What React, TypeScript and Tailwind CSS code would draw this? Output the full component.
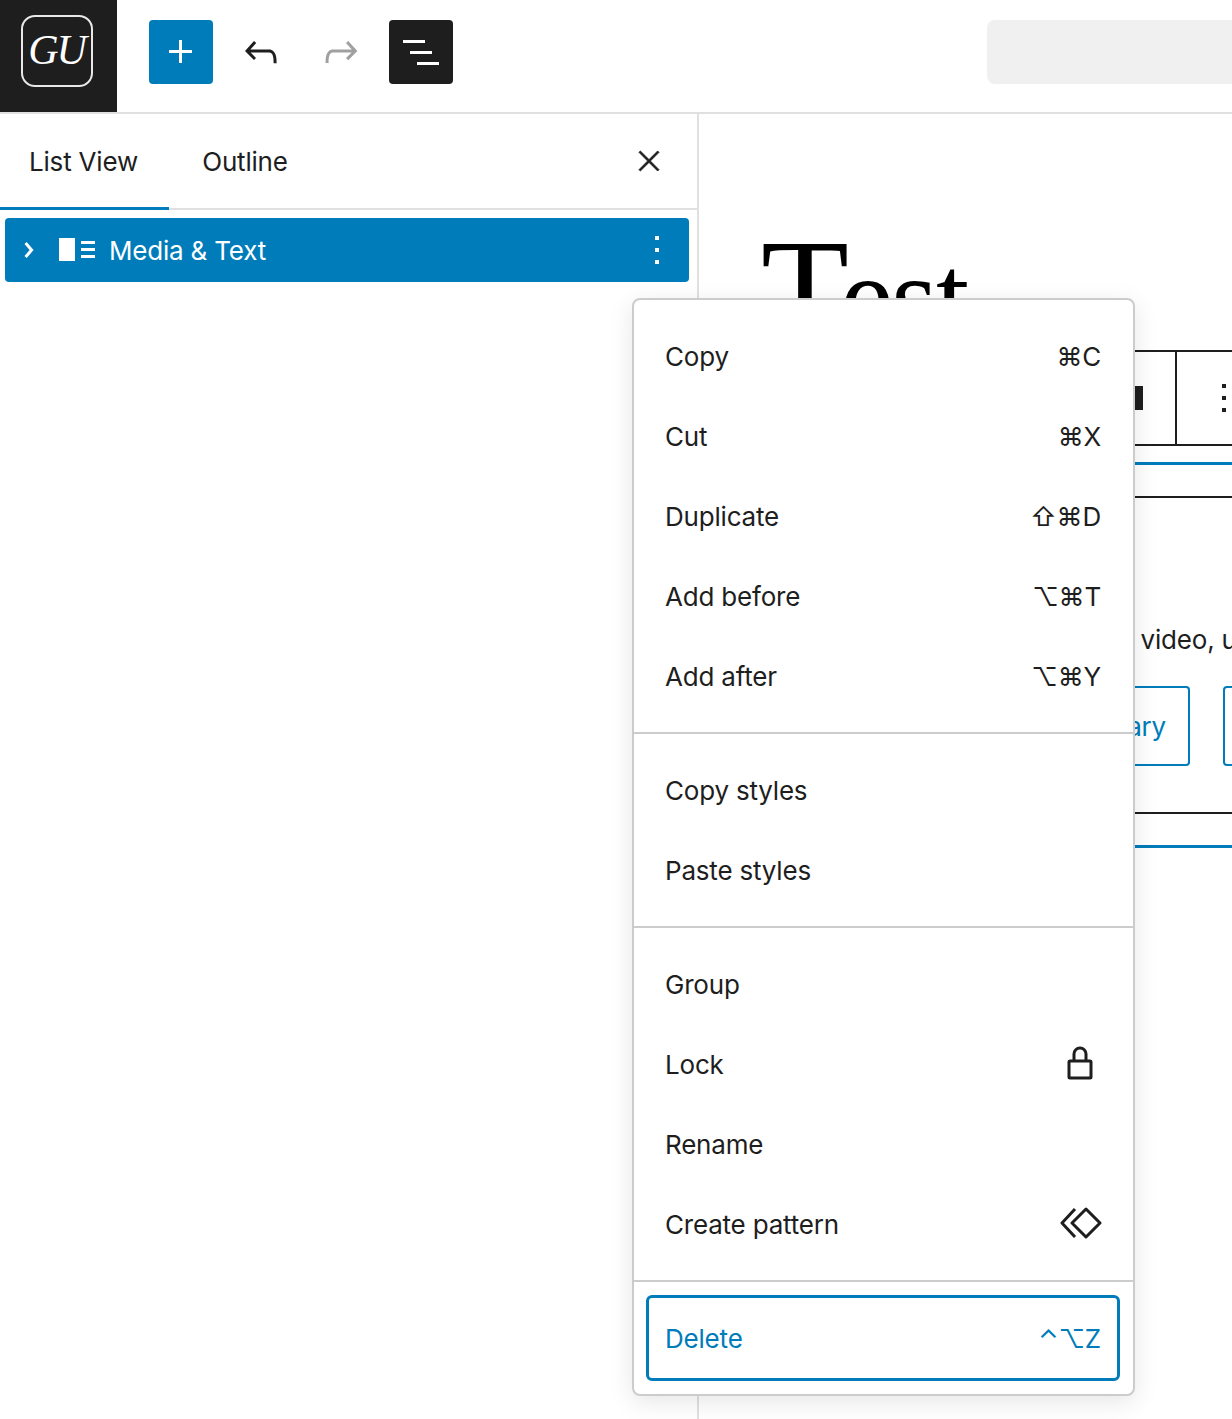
import type { ReactNode } from 'react';

const fontStack = 'font-["Inter","Noto_Sans","DejaVu_Sans",sans-serif]';

const LockIcon = () => (
  <svg className="mb-1 mr-2" width="26" height="36" viewBox="0 0 26 36" fill="none" stroke="#1e1e1e" strokeWidth="3">
    <path d="M7 17V9a6 6 0 0 1 12 0v8" />
    <rect x="2" y="16" width="22" height="17" rx="1" />
  </svg>
);

const PatternIcon = () => (
  <svg className="mb-[3px] mr-[-1px]" width="42" height="32" viewBox="0 0 42 32" fill="none" stroke="#1e1e1e" strokeWidth="3" strokeLinejoin="round">
    <path d="M15 2 2 16l13 14" />
    <path d="M26 2 40 16 26 30 12 16Z" />
  </svg>
);

type Item = { label: string; keys?: string; icon?: ReactNode };

const groups: Item[][] = [
  [
    { label: 'Copy', keys: '⌘C' },
    { label: 'Cut', keys: '⌘X' },
    { label: 'Duplicate', keys: '⇧⌘D' },
    { label: 'Add before', keys: '⌥⌘T' },
    { label: 'Add after', keys: '⌥⌘Y' },
  ],
  [{ label: 'Copy styles' }, { label: 'Paste styles' }],
  [
    { label: 'Group' },
    { label: 'Lock', icon: <LockIcon /> },
    { label: 'Rename' },
    { label: 'Create pattern', icon: <PatternIcon /> },
  ],
];

function MenuRow({ item }: { item: Item }) {
  return (
    <div className="flex h-20 items-center justify-between pl-[15px] pr-4 pt-px text-[26px] text-[#1e1e1e]">
      <span>{item.label}</span>
      {item.keys && <span>{item.keys}</span>}
      {item.icon}
    </div>
  );
}

function OptionsMenu() {
  return (
    <div className="absolute left-[632px] top-[298px] w-[503px] rounded-lg border-2 border-[#cccccc] bg-white shadow-[0_6px_24px_rgba(0,0,0,0.1)]">
      {groups.map((group, index) => (
        <div key={index} className="border-b-2 border-[#cccccc] p-4">
          {group.map((item) => (
            <MenuRow key={item.label} item={item} />
          ))}
        </div>
      ))}
      <div className="p-4">
        <div className="ml-[-1px] flex h-20 items-center justify-between rounded-[3px] pl-4 pr-4 pt-px text-[26px] text-[#007cba] outline-3 outline-[#007cba]">
          <span>Delete</span>
          <span>⌃⌥Z</span>
        </div>
      </div>
    </div>
  );
}

function Header() {
  return (
    <header className="flex h-[114px] items-start border-b-2 border-[#e0e0e0]">
      <div className="flex h-[112px] w-[117px] items-start bg-[#1e1e1e] pl-[21px] pt-[15px]">
        <div className="flex h-[72px] w-[72px] items-center justify-center rounded-[14px] border-2 border-[#e8e8e8] pb-[3px] pr-px font-['Liberation_Serif',serif] text-[42px] italic leading-none tracking-[-2px] text-white">
          GU
        </div>
      </div>
      <div className="ml-8 mt-5 flex h-16 w-16 items-center justify-center rounded bg-[#007cba]">
        <svg width="48" height="48" viewBox="0 0 24 24" fill="#fff">
          <path d="M11 12.5V17.5H12.5V12.5H17.5V11H12.5V6H11V11H6V12.5H11Z" />
        </svg>
      </div>
      <div className="ml-4 mt-5 flex h-16 w-16 items-center justify-center">
        <svg width="48" height="48" viewBox="0 0 24 24" fill="#1e1e1e">
          <path d="M18.3 11.7c-.6-.6-1.4-.9-2.3-.9H6.7l2.9-3.3-1.1-1-4.5 5L8.5 16l1-1-2.7-2.7H16c.5 0 .9.2 1.3.5 1 1 1 3.4 1 4.5v.3h1.5v-.2c0-1.5 0-4.3-1.5-5.7z" />
        </svg>
      </div>
      <div className="ml-4 mt-5 flex h-16 w-16 items-center justify-center">
        <svg width="48" height="48" viewBox="0 0 24 24" fill="#a0a0a0">
          <path d="M15.6 6.5l-1.1 1 2.9 3.3H8c-.9 0-1.7.3-2.3.9-1.4 1.5-1.4 4.2-1.4 5.6v.2h1.5v-.3c0-1.1 0-3.5 1-4.5.3-.3.7-.5 1.3-.5h9.2L14.5 15l1.1 1.1 4.6-4.6-4.6-5z" />
        </svg>
      </div>
      <div className="ml-4 mt-5 flex h-16 w-16 items-center justify-center rounded bg-[#1e1e1e]">
        <svg width="48" height="48" viewBox="0 0 24 24" fill="#fff">
          <path d="M3 6h11v1.5H3V6zm3.5 5.5h11V13h-11v-1.5zM21 17H10v1.5h11V17z" />
        </svg>
      </div>
      <div className="ml-auto mt-5 h-16 w-[245px] rounded-l-lg bg-[#f0f0f0]" />
    </header>
  );
}

function ListViewPanel() {
  return (
    <aside className="h-full w-[699px] shrink-0 border-r-2 border-[#e0e0e0]">
      <div className="relative flex h-24 items-start border-b-2 border-[#e0e0e0] text-[26px] text-[#1e1e1e]">
        <div className="relative flex h-24 w-[169px] items-center justify-center pb-[2px] pr-[2px]">
          List View
          <span className="absolute bottom-0 left-0 h-[3px] w-full bg-[#007cba]" />
        </div>
        <div className="flex h-24 w-[154px] items-center justify-center pb-[2px] pr-[2px]">Outline</div>
        <svg className="ml-auto mr-8 mt-[31px]" width="32" height="32" viewBox="0 0 24 24" fill="#1e1e1e" stroke="#1e1e1e" strokeWidth="0.6">
          <path d="m13.06 12 6.47-6.47-1.06-1.06L12 10.94 5.53 4.47 4.47 5.53 10.94 12l-6.47 6.47 1.06 1.06L12 13.06l6.47 6.47 1.06-1.06L13.06 12Z" />
        </svg>
      </div>
      <div className="ml-[5px] mt-2 flex h-16 w-[684px] items-center rounded bg-[#007cba] text-[26px] text-white">
        <svg width="48" height="48" viewBox="0 0 24 24" fill="#fff">
          <path d="M10.8622 8.04053L14.2805 12.0286L10.8622 16.0167L9.72327 15.0405L12.3049 12.0286L9.72327 9.01672L10.8622 8.04053Z" />
        </svg>
        <svg width="48" height="48" viewBox="0 0 24 24" fill="#fff">
          <path d="M3 6v11.5h8V6H3Zm11 3h7V7.5h-7V9Zm7 3.5h-7V11h7v1.5ZM14 16h7v-1.5h-7V16Z" />
        </svg>
        <span className="ml-2">Media &amp; Text</span>
        <svg className="ml-auto mr-2" width="48" height="48" viewBox="0 0 24 24" fill="#fff">
          <path d="M13 19h-2v-2h2v2zm0-6h-2v-2h2v2zm0-6h-2V5h2v2z" />
        </svg>
      </div>
    </aside>
  );
}

function Canvas() {
  return (
    <main className="min-w-0 flex-1 overflow-hidden pl-[63px] pt-[104px]">
      <div className="w-[1000px]">
        <h1 className="ml-[-1px] h-[132px] whitespace-nowrap font-['Liberation_Serif',serif] text-[144px] font-normal leading-none tracking-normal text-black">
          <span className="mr-[-9px]">T</span>
          <span className="text-[120px] tracking-[-2px]">est</span>
        </h1>
        <div className="flex h-24 items-stretch border-y-2 border-[#1e1e1e]">
          <div className="flex w-[413px] items-center justify-end pr-[32px]">
            <span className="h-6 w-2 bg-[#1e1e1e]" />
          </div>
          <div className="flex items-center border-l-2 border-[#1e1e1e] pl-[23px]">
            <svg width="48" height="48" viewBox="0 0 24 24" fill="#1e1e1e">
              <path d="M13 19h-2v-2h2v2zm0-6h-2v-2h2v2zm0-6h-2V5h2v2z" />
            </svg>
          </div>
        </div>
        <div className="mt-4 h-[3px] bg-[#007cba]" />
        <div className="mt-[31px] h-[2px] bg-[#1e1e1e]" />
        <p className="mt-[122px] whitespace-nowrap pl-[48px] text-[26px] leading-10 text-[#1e1e1e]">
          Drag and drop an image or video, upload, or choose from your library.
        </p>
        <div className="mt-[26px] flex gap-[33px] whitespace-nowrap text-[26px] text-[#007cba]">
          <div className="flex h-20 w-[202px] items-center justify-center rounded border-2 border-[#007cba]">Upload</div>
          <div className="flex h-20 w-[193px] items-center justify-end rounded border-2 border-[#007cba] pr-[22px]">Media Library</div>
          <div className="flex h-20 w-[240px] items-center justify-center rounded border-2 border-[#007cba]">Insert from URL</div>
        </div>
        <div className="mt-[46px] h-[2px] bg-[#1e1e1e]" />
        <div className="mt-[31px] h-[3px] bg-[#007cba]" />
      </div>
    </main>
  );
}

export default function App() {
  return (
    <div className={`relative h-[1419px] w-[1232px] overflow-hidden bg-white tracking-[-0.2px] ${fontStack}`}>
      <Header />
      <div className="flex h-[1305px]">
        <ListViewPanel />
        <Canvas />
      </div>
      <OptionsMenu />
    </div>
  );
}
